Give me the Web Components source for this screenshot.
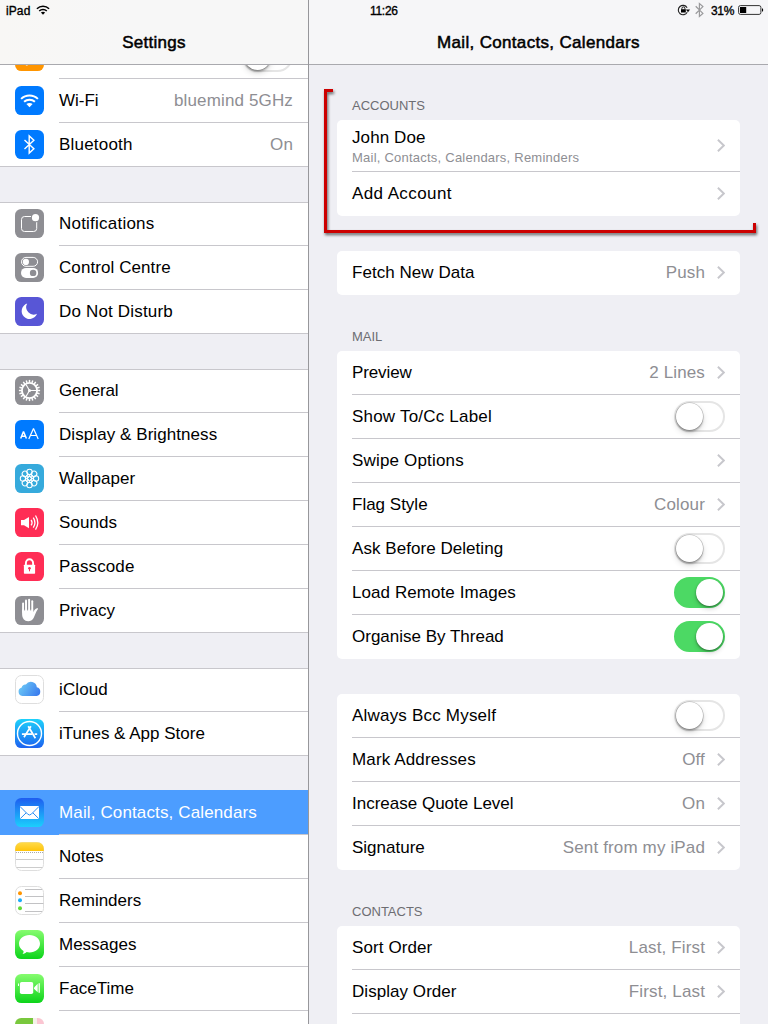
<!DOCTYPE html>
<html lang="en-GB">
<head>
<meta charset="utf-8">
<title>Settings</title>
<style>
html,body{margin:0;padding:0;width:768px;height:1024px;overflow:hidden;background:#efeff4}
body{font-family:"Liberation Sans",Arial,sans-serif;font-size:17px;color:#000}
</style>
</head>
<body>
<settings-app></settings-app>
<script>
function define(name, html, after) {
  const t = document.createElement('template');
  t.innerHTML = html;
  customElements.define(name, class extends HTMLElement {
    connectedCallback() {
      if (this.shadowRoot) return;
      this.attachShadow({mode: 'open'}).append(t.content.cloneNode(true));
      if (after) after(this, this.shadowRoot);
    }
  });
}

const grad = (id, a, b) => `<defs><linearGradient id="${id}" x1="0" y1="0" x2="0" y2="1"><stop stop-color="${a}"/><stop offset="1" stop-color="${b}"/></linearGradient></defs>`;
const tile = fill => `<rect width="29" height="29" rx="6.3" fill="${fill}"/>`;
const pale = `<rect x=".5" y=".5" width="28" height="28" rx="6" fill="#fff" stroke="#dedede"/>`;
const btPath = 'M-4.7 -4.4 L4.7 4.3 L0 8.6 V-8.6 L4.7 -4.3 L-4.7 4.4';

function gear() {
  let s = '';
  for (let i = 0; i < 20; i++) s += `<path d="M14.5 3.9V6.5" transform="rotate(${i * 18} 14.5 14.5)" stroke="#fff" stroke-width="1.5"/>`;
  return s;
}
function flower() {
  let s = '';
  for (let i = 0; i < 8; i++) s += `<circle cx="14.5" cy="8" r="2.7" transform="rotate(${i * 45} 14.5 14.5)"/>`;
  for (let i = 0; i < 8; i++) s += `<circle cx="14.5" cy="11.4" r="1.5" stroke-width=".8" transform="rotate(${i * 45 + 22.5} 14.5 14.5)"/>`;
  return s;
}

const ICONS = {
  airplane: tile('#ff9500') + '<path d="M24 14.5C24 13.5 22.8 12.9 21.5 12.9H17L12.5 5.5H10.8L13 12.9H8.5L6.8 10.6H5.3L6.3 14.5L5.3 18.4H6.8L8.5 16.1H13L10.8 23.5H12.5L17 16.1H21.5C22.8 16.1 24 15.5 24 14.5Z" fill="#fff"/>',
  wifi: tile('#007aff') + '<g fill="none" stroke="#fff" stroke-width="2"><path d="M6.1 12.9C10.8 8.3 18.2 8.3 22.9 12.9"/><path d="M9.1 15.8C12.1 12.9 16.9 12.9 19.9 15.8"/></g><path d="M11.4 18.1C13.2 16.5 15.8 16.5 17.6 18.1L14.5 21.2Z" fill="#fff"/>',
  bluetooth: tile('#007aff') + `<path d="${btPath}" transform="translate(14.2 14.5)" fill="none" stroke="#fff" stroke-width="1.4"/>`,
  notifications: tile('#8e8e93') + '<rect x="6.5" y="7.5" width="15.2" height="15" rx="3" fill="none" stroke="#fff" stroke-width="1"/><circle cx="20.5" cy="8.7" r="4.7" fill="#8e8e93"/><circle cx="20.5" cy="8.7" r="3.6" fill="#fff"/>',
  control: tile('#8e8e93') + '<rect x="6.5" y="4.4" width="16.1" height="8.9" rx="4.45" fill="none" stroke="#fff"/><circle cx="10.9" cy="8.9" r="3.1" fill="#fff"/><rect x="6" y="14.9" width="17.1" height="10" rx="5" fill="#fff"/><circle cx="18.1" cy="19.9" r="3.2" fill="#8e8e93"/>',
  moon: tile('#5856d6') + '<path d="M12.2 6.6A7.9 7.9 0 1 0 22 16.8A7.4 7.4 0 0 1 12.2 6.6Z" fill="#fff"/>',
  general: tile('#8e8e93') + gear() + '<circle cx="14.5" cy="14.5" r="7.6" fill="none" stroke="#fff" stroke-width="1.9"/><g stroke="#fff" stroke-width="1.1"><path d="M14.5 14.5H21.5M14.5 14.5L11 8.4M14.5 14.5L11 20.6"/></g><circle cx="14.5" cy="14.5" r="1.5" fill="#fff"/>',
  display: tile('#007aff') + '<g fill="none" stroke="#fff" stroke-linejoin="bevel"><path d="M5.7 18.5L8.5 11.5L11.4 18.5M6.7 16.3H10.3" stroke-width="1.5"/><path d="M13.8 19L18.5 8.5L23.2 19M15.4 15.5H21.6" stroke-width="1.2"/></g>',
  wallpaper: tile('#36aadc') + `<g fill="none" stroke="#fff" stroke-width="1.05">${flower()}<circle cx="14.5" cy="14.5" r="2"/></g>`,
  sounds: tile('#ff2d55') + '<path d="M6 12H9L14 8.9V20.3L9 17.3H6Z" fill="#fff"/><g fill="none" stroke="#fff" stroke-width="1.3"><path d="M16.1 11.8Q18 14.6 16.1 17.4"/><path d="M18.3 9.6Q21.5 14.6 18.3 19.6"/><path d="M20.5 7.5Q25 14.6 20.5 21.7"/></g>',
  passcode: tile('#ff2d55') + '<path d="M10.9 14V11.2A3.6 4 0 0 1 18.1 11.2V14" fill="none" stroke="#fff" stroke-width="1.9"/><rect x="8.9" y="12.7" width="11.2" height="9" rx=".6" fill="#fff"/><circle cx="14.5" cy="16.3" r="1.3" fill="#ff2d55"/><path d="M14.5 16V19.3" stroke="#ff2d55"/>',
  privacy: tile('#8e8e93') + '<g stroke="#fff" stroke-width="2" stroke-linecap="round" fill="none"><path d="M8.1 7.6V16"/><path d="M11 4.5V16"/><path d="M14.1 3.8V16"/><path d="M17.2 5.3V16"/></g><path d="M7.1 13.5H18.2V16.2C19.3 14.1 20.4 12.3 22.7 12.2C23.2 12.2 23.1 12.7 22.8 13.2C20.9 15.9 20.1 19.1 18.6 22C17.3 24.4 15.5 25.2 13.2 25.2C9.3 25.2 7.1 22.2 7.1 18Z" fill="#fff"/><g stroke="#8e8e93" stroke-width=".8"><path d="M9.55 7V14.5M12.55 5V14.5M15.65 5V14.5"/></g>',
  icloud: '<defs><linearGradient id="c" x1="0" y1=".3" x2="1" y2=".7"><stop stop-color="#6dcaf6"/><stop offset="1" stop-color="#3a7cee"/></linearGradient></defs>' + pale + '<path d="M7.3 21A4.3 4.3 0 0 1 6.7 12.6A3.5 3.5 0 0 1 10.9 9.6A5.9 5.9 0 0 1 21.8 12.2A4.5 4.5 0 0 1 21.6 21Z" fill="url(#c)"/>',
  itunes: grad('g', '#1ed2fb', '#1d62f0') + tile('url(#g)') + '<circle cx="14.5" cy="14.5" r="12" fill="none" stroke="#fff" stroke-width="1.4"/><g stroke="#fff" stroke-width="1.7" fill="none"><path d="M15.9 7.3L9 18.2M13.2 7.3L20.4 19.2"/><path d="M6.9 15.2H17.1M19.6 15.2H22.2"/></g>',
  mail: grad('g', '#1e5df0', '#1bcffd') + tile('url(#g)') + '<rect x="5" y="8" width="19" height="13" rx="1" fill="#fff"/><path d="M5.2 8.7L12.6 16.1Q14.5 17.9 16.4 16.1L23.8 8.7M5.4 20.5L11.2 14.8M23.6 20.5L17.8 14.8" fill="none" stroke="#2c90f5" stroke-width="1"/>',
  notes: grad('g', '#ffdb4c', '#ffc40a') + pale + '<path d="M.2 9V6.5A6.3 6.3 0 0 1 6.5 .2H22.5A6.3 6.3 0 0 1 28.8 6.5V9Z" fill="url(#g)"/><path d="M1 10.5H28" stroke="#aaa" stroke-dasharray="1 1"/><path d="M1 17.5H28M1.6 25.5H27.4" stroke="#ccc"/>',
  reminders: pale + '<path d="M10 3.5H27M10 10.5H28.5M10 17.5H28.5M10 25.5H27" stroke="#c2c2c4"/><circle cx="5" cy="7.2" r="2" fill="#ff9500"/><circle cx="5" cy="14.2" r="2" fill="#1badf8"/><circle cx="5" cy="22.2" r="2" fill="#63da38"/>',
  messages: grad('g', '#86fc6f', '#0cd41a') + tile('url(#g)') + '<path d="M14.5 5C20.4 5 25 8.8 25 13.7C25 18.6 20.4 22.4 14.5 22.4C13.5 22.4 12.4 22.2 11.6 22C10.6 23.1 9 23.9 7.4 23.8C8.4 23 8.7 21.8 8.5 20.9C5.7 19.3 4 16.7 4 13.7C4 8.8 8.6 5 14.5 5Z" fill="#fff"/>',
  facetime: grad('g', '#86fc6f', '#0cd41a') + tile('url(#g)') + '<rect x="4.9" y="8" width="13.3" height="12" rx="1.8" fill="#fff"/><path d="M3.5 9.5V12" stroke="#fff"/><path d="M19 13.5L22.7 9.8V18.2L19 14.7Z" fill="#fff"/><path d="M24.2 9.2V18.8" stroke="#fff" stroke-width="1.3"/>',
  maps: '<defs><clipPath id="k"><rect width="29" height="29" rx="6.3"/></clipPath></defs><g clip-path="url(#k)"><rect width="29" height="29" fill="#f5f1e9"/><rect width="18" height="12" fill="#79c83d"/><rect x="22" width="7" height="12" fill="#fbc5d2"/></g>'
};

define('app-icon', '<style>:host{display:block;width:29px;height:29px;flex:none}svg{display:block}</style><svg width="29" height="29" viewBox="0 0 29 29"></svg>',
  (el, r) => { r.querySelector('svg').innerHTML = ICONS[el.getAttribute('name')]; });

define('chevron-icon', `<style>:host{display:block;flex:none;width:8px;height:13px}svg{display:block}</style>
<svg width="8" height="13"><path d="M.9 .7L6.8 6.5L.9 12.3" fill="none" stroke="#c7c7cc" stroke-width="1.9"/></svg>`);

define('toggle-switch', `<style>
:host{display:block;flex:none;width:51px;height:31px;box-sizing:border-box;border-radius:16px;border:2px solid #e5e5e5;background:#fff}
i{display:block;width:27.5px;height:27.5px;border-radius:50%;background:#fff;margin:-.2px 0 0 -.2px;box-shadow:0 0 0 .6px rgba(0,0,0,.22),0 2px 2px rgba(0,0,0,.25),0 3px 6px rgba(0,0,0,.16)}
:host([on]){background:#4cd964;border-color:#4cd964}
:host([on]) i{margin-left:19.5px;box-shadow:0 1px 2px rgba(0,0,0,.4),0 3px 5px rgba(0,0,0,.16)}
</style><i></i>`);

define('nav-row', `<style>
:host{display:flex;height:44px;box-sizing:border-box;padding-left:15px;align-items:stretch;background:#fff}
app-icon{margin-top:7px}
div{flex:1;margin-left:15px;padding-right:15px;display:flex;align-items:center;justify-content:space-between;border-bottom:1px solid #c8c7cc}
:host(:last-of-type) div{border-bottom-color:transparent}
:host([selected]){background:#4c9dff;color:#fff;height:45px;padding-top:1px;margin-top:-1px}
.v{color:#8e8e93;letter-spacing:.14px}
</style><div><span class="l"><slot></slot></span><span class="v"><slot name="value"></slot></span></div>`,
  (el, r) => {
    const icon = document.createElement('app-icon');
    icon.setAttribute('name', el.getAttribute('icon'));
    r.insertBefore(icon, r.querySelector('div'));
    r.querySelector('.l').style.letterSpacing = (el.getAttribute('track') || 0) + 'px';
  });

define('nav-group', `<style>
:host{display:block;position:relative;margin-bottom:35px;background:#fff}
:host::before,:host::after{content:"";position:absolute;left:0;right:0;height:1px;background:#c8c7cc}
:host::before{top:0}:host::after{bottom:0}
:host([open])::before,:host([open])::after{display:none}
</style><slot></slot>`);

define('wifi-glyph', `<style>:host{display:block}svg{display:block}</style><svg width="14" height="10"><g fill="none" stroke="#000" stroke-width="1.5"><path d="M.9 3.8C4.3 .4 9.7 .4 13.1 3.8"/><path d="M3.2 6C5.3 4 8.7 4 10.8 6"/></g><path d="M4.9 7.5C6.2 6.5 7.8 6.5 9.1 7.5L7 9.7Z"/></svg>`);

define('status-icons', `<style>
:host{display:flex;align-items:center;height:20px}svg{display:block;flex:none}
span{font-size:12px;-webkit-text-stroke:.35px #000;margin:2px 4px 0 6px;width:23px;white-space:nowrap;letter-spacing:-.3px}
</style>
<svg width="14" height="20"><path d="M10.1 7.7A4.7 4.7 0 1 0 10.2 12.2" fill="none" stroke="#222" stroke-width="1.1"/><path d="M8.9 9.5H13.1L11 12.2Z" fill="#111"/><rect x="4" y="9.2" width="4.8" height="3.3" fill="#000"/><path d="M4.9 9.3V8.4A1.5 1.5 0 0 1 7.9 8.4V9.3" fill="none" stroke="#000" stroke-width=".9"/></svg>
<svg width="10" height="20" style="margin-left:4px"><path d="M.7 6.3L7.9 13.4L4.4 16.4V3.6L7.9 6.6L.7 13.7" fill="none" stroke="#9a9a9c" stroke-width="1.2"/></svg>
<span>31%</span>
<svg width="26" height="20"><rect x=".6" y="5.6" width="22.3" height="8.8" rx="1.8" fill="none" stroke="#333" stroke-width="1"/><rect x="2" y="7" width="6.2" height="6" fill="#000"/><path d="M24 8.2Q25.2 8.5 25.2 10T24 11.8Z"/></svg>`);

define('pane-header', `<style>
:host{display:flex;flex-direction:column;height:65px;box-sizing:border-box;border-bottom:1px solid #a9a9ae;flex:none;position:relative;z-index:2;background:var(--bar)}
.s{height:20px;display:flex;align-items:center;font-size:12px}
.t{height:44px;padding-top:1px;box-sizing:border-box;display:flex;align-items:center;justify-content:center;-webkit-text-stroke:.5px #000;letter-spacing:var(--title-track,0)}
.t span{position:relative;top:.5px}
</style><div class="s"><slot name="status"></slot></div><div class="t"><span><slot></slot></span></div>`);

define('section-label', `<style>:host{display:block;height:16px;line-height:16px;font-size:13px;color:#6d6d72;padding-left:15px}</style><slot></slot>`);

define('settings-card', `<style>:host{display:block;background:#fff;border-radius:5px}</style><slot></slot>`);

define('detail-row', `<style>
:host{display:flex;height:44px;box-sizing:border-box;margin-left:15px;padding-right:15px;border-bottom:1px solid #c8c7cc;align-items:center;justify-content:space-between}
:host([tall]){height:52px}
:host(:last-of-type){border-bottom-color:transparent}
.r{display:flex;align-items:center;gap:12px;color:#8e8e93;letter-spacing:.14px}
.m{display:flex;flex-direction:column}
:host([tall]) .m{padding-top:1px}
::slotted([slot=sub]){font-size:13px;color:#8e8e93;line-height:15px;margin-top:2px;letter-spacing:.23px}
</style><div class="m"><span class="l"><slot></slot></span><slot name="sub"></slot></div><div class="r"><slot name="value"></slot></div>`,
  (el, r) => {
    const k = el.getAttribute('kind');
    const end = document.createElement(k ? 'toggle-switch' : 'chevron-icon');
    if (k === 'on') end.setAttribute('on', '');
    r.querySelector('.r').append(end);
    r.querySelector('.l').style.letterSpacing = (el.getAttribute('track') || 0) + 'px';
  });

define('callout-bracket', `<style>:host{display:block;position:absolute;left:11px;top:85px;pointer-events:none}svg{display:block;overflow:visible;filter:drop-shadow(1.5px 2px 1.5px rgba(0,0,0,.6))}</style>
<svg width="440" height="150"><path d="M13 5.5H5.5V146.500H434.500V138" fill="none" stroke="#c00" stroke-width="3"/></svg>`);

define('settings-sidebar', `<style>
:host{display:flex;flex-direction:column;width:308px;flex:none;height:1024px;border-right:1px solid #97979b;overflow:hidden;--bar:linear-gradient(90deg,#f8f7f5,#f7f7f7 40%);--title-track:.25px}
.list{margin-top:-30px}
.ip{display:flex;align-items:center;gap:6px;padding:2px 0 0 6px;-webkit-text-stroke:.35px #000;letter-spacing:.1px}
wifi-glyph{margin-top:-2px}
</style>
<pane-header><div slot="status" class="ip"><span>iPad</span><wifi-glyph></wifi-glyph></div>Settings</pane-header>
<div class="list">
<nav-group><nav-row icon="airplane">Airplane Mode<toggle-switch slot="value"></toggle-switch></nav-row><nav-row icon="wifi">Wi-Fi<span slot="value">bluemind 5GHz</span></nav-row><nav-row icon="bluetooth" track=".2">Bluetooth<span slot="value">On</span></nav-row></nav-group>
<nav-group><nav-row icon="notifications" track=".22">Notifications</nav-row><nav-row icon="control" track=".08">Control Centre</nav-row><nav-row icon="moon" track=".17">Do Not Disturb</nav-row></nav-group>
<nav-group><nav-row icon="general" track="-.15">General</nav-row><nav-row icon="display" track=".07">Display &amp; Brightness</nav-row><nav-row icon="wallpaper" track=".03">Wallpaper</nav-row><nav-row icon="sounds" track=".08">Sounds</nav-row><nav-row icon="passcode" track=".1">Passcode</nav-row><nav-row icon="privacy" track=".03">Privacy</nav-row></nav-group>
<nav-group><nav-row icon="icloud" track=".1">iCloud</nav-row><nav-row icon="itunes">iTunes &amp; App Store</nav-row></nav-group>
<nav-group open><nav-row icon="mail" selected track=".13">Mail, Contacts, Calendars</nav-row><nav-row icon="notes">Notes</nav-row><nav-row icon="reminders">Reminders</nav-row><nav-row icon="messages">Messages</nav-row><nav-row icon="facetime">FaceTime</nav-row><nav-row icon="maps"></nav-row></nav-group>
</div>`);

define('settings-detail', `<style>
:host{display:flex;flex-direction:column;width:459px;height:1024px;overflow:hidden;position:relative;--bar:#f6f6f8;--title-track:.33px}
.c{padding:33px 28px 0;display:flex;flex-direction:column;flex:none}
section-label{margin-bottom:6px}
settings-card{margin-bottom:35px}
settings-card.n{margin-bottom:34px}
.st{display:flex;width:100%;padding-left:61px;align-items:center}
.tm{margin-top:2px;-webkit-text-stroke:.35px #000;flex:1;letter-spacing:-.3px}
status-icons{margin-right:4px}
</style>
<pane-header><div slot="status" class="st"><span class="tm">11:26</span><status-icons></status-icons></div>Mail, Contacts, Calendars</pane-header>
<div class="c">
<section-label>ACCOUNTS</section-label>
<settings-card><detail-row tall track=".1">John Doe<span slot="sub">Mail, Contacts, Calendars, Reminders</span></detail-row><detail-row track=".4">Add Account</detail-row></settings-card>
<settings-card class="n"><detail-row track=".05">Fetch New Data<span slot="value">Push</span></detail-row></settings-card>
<section-label>MAIL</section-label>
<settings-card><detail-row track="-.12">Preview<span slot="value">2 Lines</span></detail-row><detail-row kind="off" track=".2">Show To/Cc Label</detail-row><detail-row track=".17">Swipe Options</detail-row><detail-row>Flag Style<span slot="value">Colour</span></detail-row><detail-row kind="off" track=".05">Ask Before Deleting</detail-row><detail-row kind="on" track=".07">Load Remote Images</detail-row><detail-row kind="on">Organise By Thread</detail-row></settings-card>
<settings-card class="n"><detail-row kind="off" track=".2">Always Bcc Myself</detail-row><detail-row track=".14">Mark Addresses<span slot="value">Off</span></detail-row><detail-row>Increase Quote Level<span slot="value">On</span></detail-row><detail-row>Signature<span slot="value">Sent from my iPad</span></detail-row></settings-card>
<section-label>CONTACTS</section-label>
<settings-card><detail-row track=".1">Sort Order<span slot="value">Last, First</span></detail-row><detail-row track=".05">Display Order<span slot="value">First, Last</span></detail-row><detail-row></detail-row></settings-card>
</div>
<callout-bracket></callout-bracket>`);

define('settings-app', `<style>:host{display:flex;width:768px;height:1024px;overflow:hidden;background:#efeff4}</style><settings-sidebar></settings-sidebar><settings-detail></settings-detail>`);
</script>
</body>
</html>
